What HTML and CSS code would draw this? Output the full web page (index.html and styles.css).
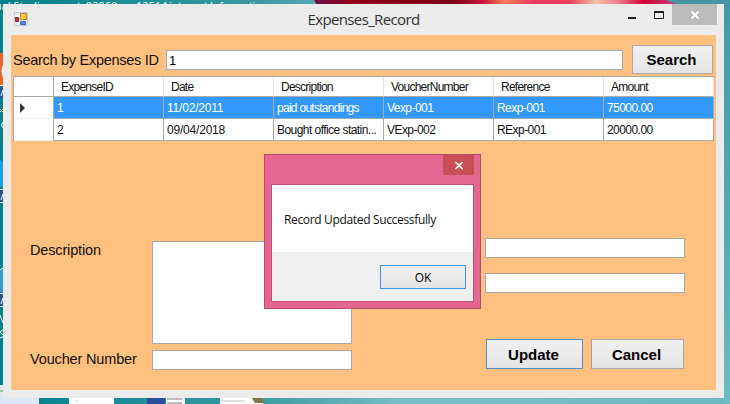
FILE: index.html
```html
<!DOCTYPE html>
<html lang="en">
<head>
<meta charset="utf-8">
<title>Expenses_Record</title>
<link rel="stylesheet" href="styles.css">
</head>
<body>
<div class="desktop">
  <svg class="wallpaper" width="730" height="404" viewBox="0 0 730 404" aria-hidden="true">
    <defs>
      <linearGradient id="sea" x1="0" x2="1"><stop offset="0" stop-color="#00808b"/><stop offset=".35" stop-color="#3b99a2"/><stop offset=".55" stop-color="#78bec8"/><stop offset="1" stop-color="#6db8c2"/></linearGradient>
      <linearGradient id="petal" x1="0" x2="1"><stop offset="0" stop-color="#70104a"/><stop offset=".1" stop-color="#8e0018"/><stop offset=".38" stop-color="#7c0016"/><stop offset=".46" stop-color="#c81838"/><stop offset=".52" stop-color="#f77a5c"/><stop offset=".6" stop-color="#ec3b62"/><stop offset=".7" stop-color="#e9405f"/><stop offset=".77" stop-color="#f3c0a8"/><stop offset=".83" stop-color="#f08090"/><stop offset=".9" stop-color="#d50035"/><stop offset="1" stop-color="#c04b83"/></linearGradient>
      <linearGradient id="edge" x1="0" x2="0" y1="0" y2="1"><stop offset="0" stop-color="#4597a4"/><stop offset=".6" stop-color="#55abb4"/><stop offset="1" stop-color="#70bac4"/></linearGradient>
    </defs>
    <rect width="730" height="404" fill="url(#sea)"/>
    <path d="M314 0H667L680 5H317Z" fill="url(#petal)"/>
    <path d="M667 0h63v5h-50z" fill="#4597a4"/>
    <rect x="723" width="7" height="404" fill="url(#edge)"/>
    <path d="M0 53h4v32H0z" fill="#e66525"/><path d="M3 65q-3 5 0 13" fill="#fff"/>
    <path d="M0 86h4v12H0z" fill="#27559a"/><path d="M0 160q3 1 4 4v23H0z" fill="#15a3e6"/>
    <path d="M0 190h4v12H0z" fill="#27559a"/><path d="M0 271l4-4v25H0z" fill="#319ad6"/><path d="M0 293h4v13H0z" fill="#27559a"/>
    <path d="M0 85.500h4M0 189.500h4M0 202.500h4M0 293.500h4M0 306.500h4M0 270l3-2M1 96l2-6M1 200l2-6M1 304l2-6M0 109l3 3m0-3l-3 3M3 122q-3 3 0 6M0 315l3 8M3 330q-5 2-1 4t-2 4" fill="none" stroke="#fff"/>
    <path d="M0 385h4v13h35v6H0z" fill="#dce8f3"/>
    <path d="M0 391h3" stroke="#8fc795" stroke-width="2"/>
    <path d="M69 398h45v6H69zM166 398h19v6h-19zM220 398h43v6h-43z" fill="#fff"/>
    <path d="M147 398h18v6h-18z" fill="#294f9a"/><path d="M167 399h15M167 403h15" stroke="#778"/>
    <path d="M252 398h11v5h-8z" fill="#817345"/><path d="M75 401h3M220 401h25" stroke="#b9c5c8"/>
  </svg>
  <div class="desktop-label">ual Studio</div>
  <div class="desktop-label second">ment_02960</div>
  <div class="desktop-label third">mp12514</div>
  <div class="desktop-label fourth">internet Information</div>
  <main class="window">
    <header class="titlebar">
      <svg class="app-icon" width="14" height="15" viewBox="0 0 14 15" aria-hidden="true"><path d="M.5.5h13v13H.5z" fill="#eef0f6" stroke="#c4c8d4"/><path d="M6.500 1.500h6v6h-6z" fill="#f9c93b" stroke="#ad8b32"/><path d="M1.500 5.500h3v4h-3z" fill="#c33831" stroke="#912c2c"/><path d="M6.500 9.500h5v3h-5z" fill="#5c91e2" stroke="#4267b0"/></svg>
      <h1>Expenses_Record</h1>
      <svg class="controls" width="90" height="21" viewBox="0 0 90 21" aria-hidden="true"><path d="M45 0h45v21H45z" fill="#bcbcbc"/><path d="M1 14h8" stroke="#222" stroke-width="2"/><path d="M27.500 7.500h9v7h-9z" fill="none" stroke="#222"/><path d="M27 8h10" stroke="#222" stroke-width="2"/><path d="M64.500 7.500l7 7m0-7l-7 7" stroke="#fff" stroke-width="1.8"/></svg>
    </header>
    <section class="client">
      <div class="search">
        <label for="query">Search by Expenses ID</label>
        <input id="query" value="1">
        <button>Search</button>
      </div>
      <table class="records">
        <thead><tr><th class="marker"></th><th>ExpenseID</th><th>Date</th><th>Description</th><th>VoucherNumber</th><th>Reference</th><th>Amount</th></tr></thead>
        <tbody>
          <tr class="selected"><td class="marker"><svg width="6" height="10" viewBox="0 0 6 10"><path d="M0 0l5 5-5 5z" fill="#333"/></svg></td><td>1</td><td class="date">11/02/2011</td><td class="tight">paid outstandings</td><td>Vexp-001</td><td>Rexp-001</td><td>75000.00</td></tr>
          <tr><td class="marker"></td><td>2</td><td class="date">09/04/2018</td><td>Bought office statin...</td><td>VExp-002</td><td>RExp-001</td><td>20000.00</td></tr>
        </tbody>
      </table>
      <div class="form">
        <div class="fields">
          <label for="description">Description</label><textarea id="description"></textarea>
          <label for="voucher">Voucher Number</label><input id="voucher">
        </div>
        <div class="side">
          <input aria-label="Reference"><input aria-label="Amount">
          <div class="actions"><button class="update">Update</button><button class="cancel">Cancel</button></div>
        </div>
      </div>
    </section>
  </main>
  <div class="dialog" role="dialog">
    <div class="dialog-title"><svg width="31" height="20" viewBox="0 0 31 20"><path d="M0 0h31v20H0z" fill="#c84f54"/><path d="M12.500 7l7 7m0-7l-7 7" stroke="#fff" stroke-width="1.7"/></svg></div>
    <div class="dialog-body">
      <p>Record Updated Successfully</p>
      <div class="dialog-footer"><button>OK</button></div>
    </div>
  </div>
</div>
</body>
</html>
```
FILE: styles.css
```css
* { box-sizing: border-box; }
body { margin: 0; overflow: hidden; font-family: "Liberation Sans", sans-serif; color: #111; }
.desktop { position: relative; width: 730px; height: 404px; padding: 4px 0 0 3px; overflow: hidden; }
.wallpaper { position: absolute; left: 0; top: 0; }
.desktop-label { position: absolute; left: -5px; top: 0; color: #fff; font: 11px/12px "Open Sans", sans-serif; white-space: nowrap; }
.second { left: 54px; }
.third { left: 119px; }
.fourth { left: 169px; letter-spacing: -.3px; }
.window { position: relative; width: 721px; height: 394px; padding: 0 8px; background: #ebebeb; }
.titlebar { display: flex; height: 31px; align-items: flex-start; }
.app-icon { margin: 8px 0 0 3px; }
h1 { flex: 1; margin: 5px 0 0 72px; text-align: center; font: 15px/20px "Open Sans", sans-serif; letter-spacing: -.63px; color: #333; }
.controls { margin-right: -1px; }
.client { width: 705px; height: 355px; background: #ffc080; padding: 10px 2px 0; }
.search { display: flex; height: 31px; }
.search label { width: 153px; padding-top: 7px; font-size: 14.5px; line-height: 17px; letter-spacing: -.28px; white-space: nowrap; }
input, textarea { display: block; border: 1px solid #a4a9ae; background: #fff; border-radius: 0; margin: 0; padding: 0 2px; outline: 0; resize: none; font: 13px "Liberation Sans", sans-serif; }
.search input { width: 457px; height: 20px; margin: 5px 9px 0 0; }
button { margin: 0; padding: 0; border: 1px solid #a6a6aa; border-radius: 0; background: linear-gradient(#f0f0f0, #e5e5e5); color: #000; font: bold 15px "Liberation Sans", sans-serif; }
.search button { width: 81px; height: 29px; padding-right: 2px; }
.records { width: 701px; height: 65px; table-layout: fixed; border-collapse: separate; border-spacing: 0; background: #fff; border-left: 1px solid #aaa; border-top: 1px solid #aaa; font-size: 12px; letter-spacing: -.55px; }
.records th, .records td { height: 22px; padding: 0 3px; border-right: 1px solid #aaa; border-bottom: 1px solid #aaa; font-weight: normal; text-align: left; line-height: 14px; white-space: nowrap; overflow: hidden; }
.records th { height: 20px; padding-left: 7px; border-right-color: #e0e5ec; letter-spacing: -.75px; }
.records .marker { width: 40px; padding-left: 6px; border-right-color: #aaa; }
.records td.marker { border-bottom-color: #eee; }
.marker svg { display: block; }
.selected td:not(.marker) { background: #3399ff; color: #fff; }
.records .date { letter-spacing: -.2px; }
.records .tight { letter-spacing: -.72px; }
.form { display: flex; justify-content: space-between; padding: 97px 29px 0 17px; }
.fields { display: grid; grid-template-columns: 122px 200px; grid-template-rows: 103px 20px; row-gap: 6px; padding-top: 3px; font-size: 14.5px; letter-spacing: -.15px; }
.fields label { line-height: 17px; padding-top: 1px; white-space: nowrap; }
.fields input, .fields textarea { width: 200px; height: 100%; }
.side { width: 200px; }
.side input { width: 200px; height: 20px; margin-bottom: 15px; }
.actions { display: flex; gap: 8px; padding: 31px 0 0 1px; }
.actions button { height: 30px; padding-right: 2px; }
.update { width: 97px; border-color: #5690cb; }
.cancel { width: 93px; }
.dialog { position: absolute; left: 264px; top: 154px; width: 217px; height: 155px; padding: 0 6px; border: 1px solid #b64d70; background: #e56690; }
.dialog-title { height: 29px; display: flex; justify-content: flex-end; }
.dialog-body { height: 118px; background: #fff; border: 1px solid #c64c79; }
.dialog-body p { height: 67px; margin: 0; padding: 26px 0 0 12px; font: 12px/17px "Open Sans", sans-serif; letter-spacing: -.34px; white-space: nowrap; }
.dialog-footer { height: 49px; padding: 13px 7px 0 0; display: flex; justify-content: flex-end; align-items: flex-start; background: #efefef; }
.dialog-footer button { width: 86px; height: 24px; border-color: #4294de; font: 12px "Open Sans", sans-serif; }
```
